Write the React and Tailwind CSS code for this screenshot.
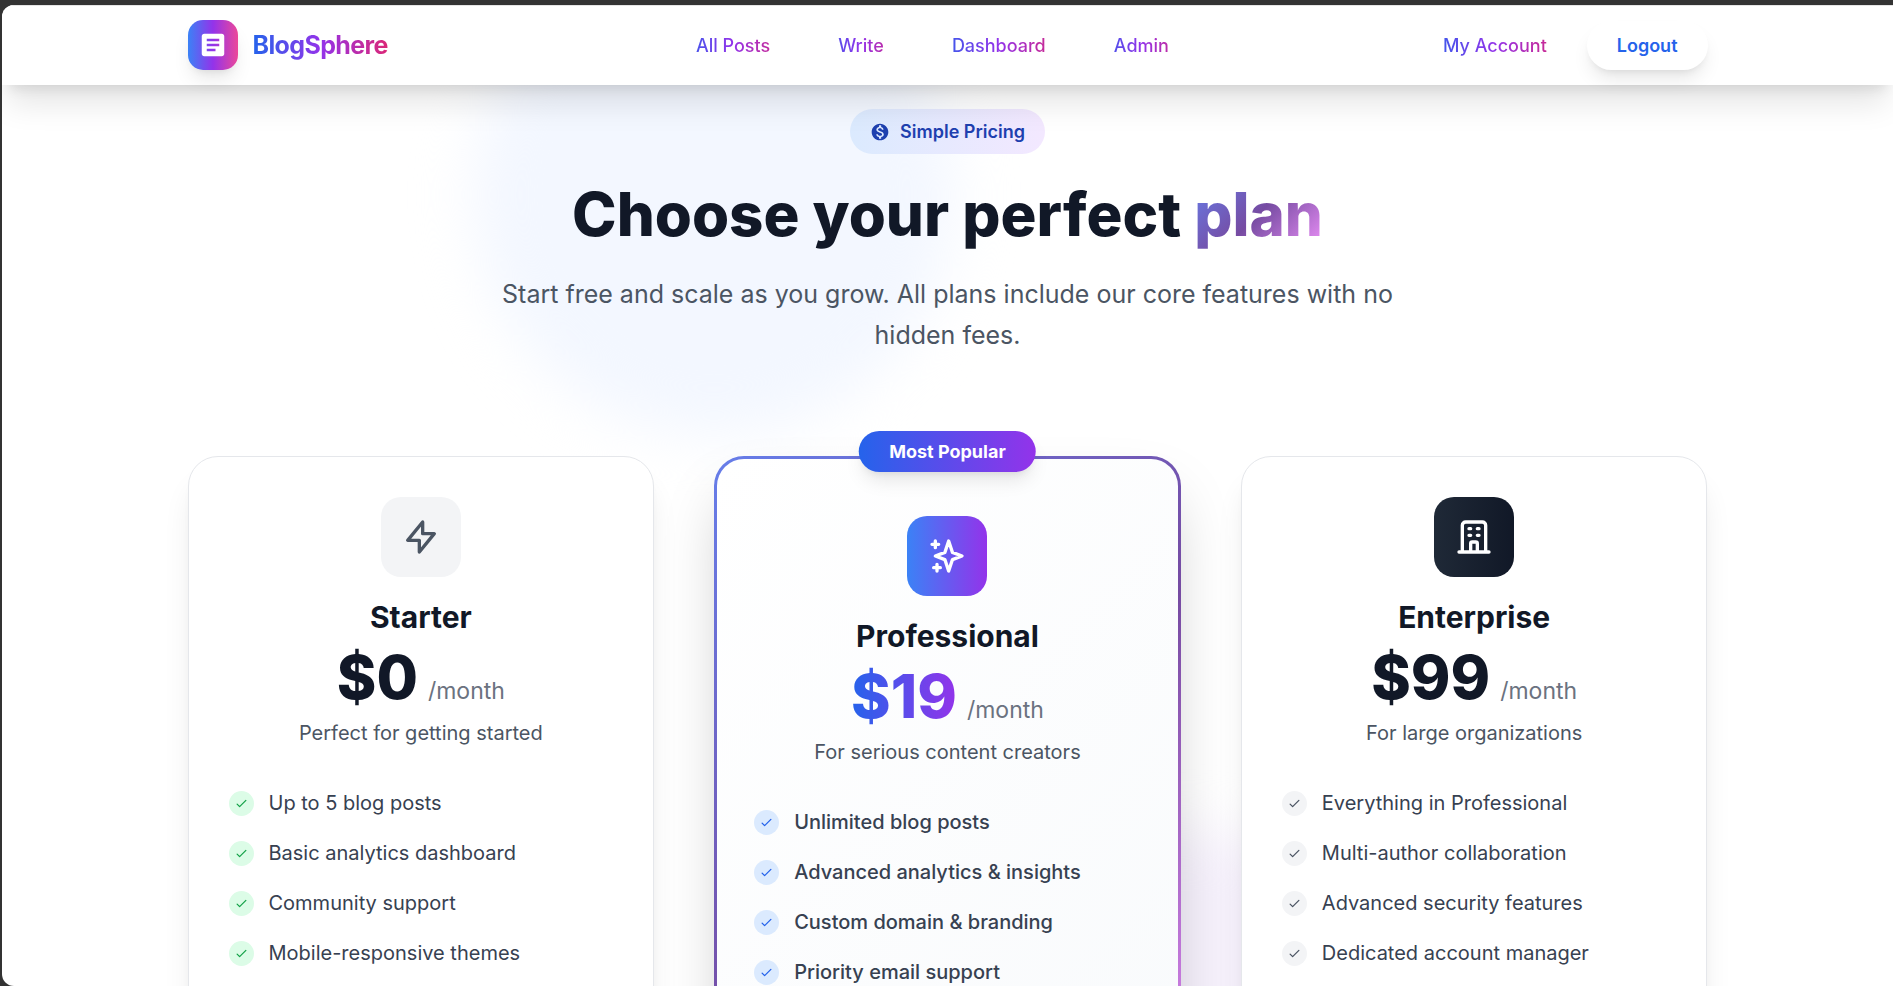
import { MdArticle, MdMonetizationOn } from "react-icons/md";

const links = ["All Posts", "Write", "Dashboard", "Admin"];

function StrokeIcon({ d, className }) {
  return (
    <svg viewBox="0 0 24 24" className={className} fill="none" stroke="currentColor" strokeWidth="2" strokeLinecap="round" strokeLinejoin="round" aria-hidden="true">
      <path d={d} />
    </svg>
  );
}

const BOLT = "M13 10V3L4 14h7v7l9-11h-7z";
const STARS = "M5 3v4M3 5h4M6 17v4m-2-2h4m5-16l2.286 6.857L21 12l-5.714 2.143L13 21l-2.286-6.857L5 12l5.714-2.143L13 3z";
const BUILDING =
  "M19 21V5a2 2 0 0 0-2-2H7a2 2 0 0 0-2 2v16m14 0h2m-2 0h-5m-9 0H3m2 0h5M9 7h1m-1 4h1m4-4h1m-1 4h1m-5 10v-5a1 1 0 0 1 1-1h2a1 1 0 0 1 1 1v5m-4 0h4";
const CHECK = "M5 13l4 4L19 7";

const plans = [
  {
    name: "Starter",
    price: "$0",
    blurb: "Perfect for getting started",
    icon: BOLT,
    iconClass: "bg-[#f3f4f6] text-[#4b5563]",
    checkClass: "bg-[#dcfce7] text-[#16a34a]",
    features: ["Up to 5 blog posts", "Basic analytics dashboard", "Community support", "Mobile-responsive themes"],
  },
  {
    name: "Professional",
    price: "$19",
    blurb: "For serious content creators",
    icon: STARS,
    iconClass: "bg-linear-to-r/srgb from-[#3b82f6] to-[#9333ea] text-white",
    checkClass: "bg-[#dbeafe] text-[#2563eb]",
    popular: true,
    features: ["Unlimited blog posts", "Advanced analytics & insights", "Custom domain & branding", "Priority email support"],
  },
  {
    name: "Enterprise",
    price: "$99",
    blurb: "For large organizations",
    icon: BUILDING,
    iconClass: "bg-linear-to-r/srgb from-[#1f2937] to-[#111827] text-white",
    checkClass: "bg-[#f3f4f6] text-[#4b5563]",
    features: ["Everything in Professional", "Multi-author collaboration", "Advanced security features", "Dedicated account manager"],
  },
];

function Plan({ plan }) {
  const frame = plan.popular
    ? "border-3 border-transparent px-[37px] pt-[57px] [background:linear-gradient(135deg,#ffffff,#f8fafc)_padding-box,linear-gradient(135deg,#667eea,#764ba2_50%,#f093fb)_border-box] shadow-[0_31px_62px_-15px_rgba(0,0,0,0.25)]"
    : "border border-[#e5e7eb] bg-white px-10 pt-10 shadow-[0_25px_31px_-6px_rgba(0,0,0,0.1),0_10px_12px_-7px_rgba(0,0,0,0.1)]";
  return (
    <article className={`relative min-h-[740px] rounded-[30px] pb-10 ${frame}`}>
      {plan.popular && (
        <span className="absolute -top-7 left-1/2 -translate-x-1/2 whitespace-nowrap rounded-full bg-linear-to-r/srgb from-[#2563eb] to-[#9333ea] px-[30px] py-2 text-[18px] leading-[25px] font-bold text-white shadow-[0_12px_19px_-4px_rgba(0,0,0,0.1),0_5px_8px_-5px_rgba(0,0,0,0.1)]">
          Most Popular
        </span>
      )}
      <div className="flex flex-col items-center text-center">
        <div className={`flex size-20 items-center justify-center rounded-[20px] ${plan.iconClass}`}>
          <StrokeIcon d={plan.icon} className="size-10" />
        </div>
        <h2 className="mt-5 text-[30px] leading-10 font-bold text-[#111827]">{plan.name}</h2>
        <p className="mt-2.5 flex items-baseline gap-2.5">
          <span className={`text-[60px] leading-[61px] font-extrabold ${plan.popular ? "bg-linear-to-r/srgb from-[#2563eb] to-[#9333ea] bg-clip-text text-transparent" : "text-[#111827]"}`}>
            {plan.price}
          </span>
          <span className="text-[23px] leading-8 text-[#6b7280]">/month</span>
        </p>
        <p className="mt-2.5 text-[20px] leading-[30px] text-[#4b5563]">{plan.blurb}</p>
      </div>
      <ul className="mt-10 flex flex-col gap-5">
        {plan.features.map((feature) => (
          <li key={feature} className="flex items-center gap-[15px]">
            <span className={`flex size-[25px] shrink-0 items-center justify-center rounded-full ${plan.checkClass}`}>
              <StrokeIcon d={CHECK} className="size-[15px]" />
            </span>
            <span className={`text-[20px] leading-[30px] text-[#374151] ${plan.popular ? "font-medium" : ""}`}>{feature}</span>
          </li>
        ))}
      </ul>
    </article>
  );
}

const navText =
  "bg-linear-to-r/srgb from-[#2563eb] via-[#9333ea] to-[#db2777] bg-clip-text px-5 py-2 text-[18px] leading-[25px] font-medium text-transparent";

export default function App() {
  return (
    <div className="flex h-screen flex-col bg-[#333333] pt-[5px] pl-0.5 font-[Inter,sans-serif]">
      <div className="relative isolate min-h-0 flex-1 overflow-hidden rounded-l-[12px] bg-white">
        <div className="absolute top-[-50px] left-[472px] -z-10 size-[480px] rounded-full bg-[#f3f7ff] blur-[28px]" />
        <div className="absolute top-[825px] left-[940px] -z-10 size-[480px] rounded-full bg-[#f6f1fc] blur-[28px]" />
        <header className="relative z-10 bg-white/95 shadow-[inset_0_1px_0_#e5e5e5,0_25px_31px_-6px_rgba(0,0,0,0.1),0_10px_12px_-7px_rgba(0,0,0,0.1)]">
          <div className="mx-auto flex h-20 max-w-[1600px] items-center justify-between px-10">
            <a href="#home" className="flex items-center gap-[15px]">
              <span className="flex size-[50px] items-center justify-center rounded-[15px] bg-linear-to-r/srgb from-[#3b82f6] via-[#9333ea] to-[#ec4899] text-white shadow-[0_12px_19px_-4px_rgba(0,0,0,0.1),0_5px_8px_-5px_rgba(0,0,0,0.1)]">
                <MdArticle className="size-[30px]" aria-hidden="true" />
              </span>
              <span className="bg-linear-to-r/srgb from-[#2563eb] via-[#9333ea] to-[#db2777] bg-clip-text text-[25px] leading-[35px] font-bold tracking-tight text-transparent">
                BlogSphere
              </span>
            </a>
            <nav className="ml-[54px] flex items-center gap-7">
              {links.map((label) => (
                <a key={label} href="#nav" className={navText}>
                  {label}
                </a>
              ))}
            </nav>
            <div className="flex items-center gap-5">
              <a href="#account" className={navText}>
                My Account
              </a>
              <button type="button" className="rounded-[25px] bg-white px-[30px] py-3 text-[18px] leading-[25px] font-semibold text-[#2563eb] shadow-[0_12px_19px_-4px_rgba(0,0,0,0.1),0_5px_8px_-5px_rgba(0,0,0,0.1)]">
                Logout
              </button>
            </div>
          </div>
        </header>
        <main className="mx-auto max-w-[1600px] px-10 pt-6">
          <section className="flex flex-col items-center text-center">
            <p className="flex items-center gap-2.5 rounded-full bg-linear-to-r/srgb from-[#dbeafe] to-[#f3e8ff] px-5 py-2.5 text-[18px] leading-[25px] font-semibold text-[#1e40af]">
              <MdMonetizationOn className="size-5" aria-hidden="true" />
              Simple Pricing
            </p>
            <h1 className="mt-[30px] text-[60px] leading-[60px] font-extrabold text-[#111827]">
              Choose your perfect{" "}
              <span className="bg-[linear-gradient(135deg,#667eea,#764ba2_50%,#f093fb)] bg-clip-text text-transparent">plan</span>
            </h1>
            <p className="mt-[30px] max-w-[960px] text-[25px] leading-[41px] text-[#4b5563]">
              Start free and scale as you grow. All plans include our core features with no hidden fees.
            </p>
          </section>
          <section className="mt-[100px] grid grid-cols-3 gap-[60px]">
            {plans.map((plan) => (
              <Plan key={plan.name} plan={plan} />
            ))}
          </section>
        </main>
      </div>
    </div>
  );
}
